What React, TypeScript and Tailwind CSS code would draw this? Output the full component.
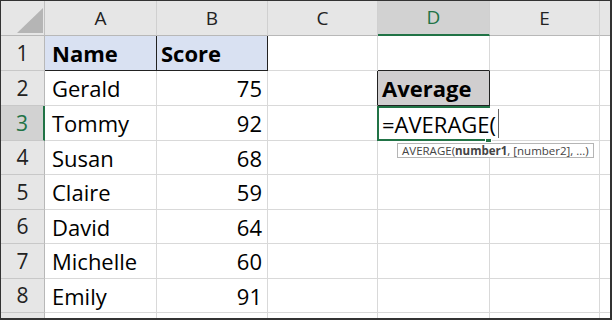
import React from "react";

const font = { fontFamily: '"Open Sans", "Noto Sans", sans-serif' };

type Row = {
  n: number;
  h: string;
  a: string;
  b: string;
};

const rows: Row[] = [
  { n: 1, h: "h-[35px]", a: "Name", b: "Score" },
  { n: 2, h: "h-[35px]", a: "Gerald", b: "75" },
  { n: 3, h: "h-[35px]", a: "Tommy", b: "92" },
  { n: 4, h: "h-[34px]", a: "Susan", b: "68" },
  { n: 5, h: "h-[35px]", a: "Claire", b: "59" },
  { n: 6, h: "h-[34px]", a: "David", b: "64" },
  { n: 7, h: "h-[35px]", a: "Michelle", b: "60" },
  { n: 8, h: "h-[34px]", a: "Emily", b: "91" },
];

function HeaderCell({ w, label, active }: { w: string; label: string; active?: boolean }) {
  return (
    <div
      className={`${w} h-full shrink-0 flex items-center justify-center text-[19px] leading-none border-r border-r-[#d0d0d0] ${
        active
          ? "bg-[#d2d2d2] text-[#217346] border-b-2 border-b-[#217346]"
          : "bg-[#e6e6e6] text-[#222] border-b border-b-[#b8b8b8]"
      }`}
    >
      {label}
    </div>
  );
}

export default function App() {
  return (
    <div
      className="w-[612px] h-[320px] bg-white border-l border-t border-l-[#333] border-t-[#333] border-r-2 border-b-2 border-r-[#333] border-b-[#333] flex flex-col overflow-hidden text-black"
      style={font}
    >
      {/* column header */}
      <div className="flex h-[35px] shrink-0">
        <div className="w-[44px] h-full shrink-0 bg-[#e6e6e6] border-r border-b border-r-[#c0c0c0] border-b-[#b8b8b8] relative">
          <svg width="43" height="34" className="absolute left-0 top-0">
            <polygon points="42,7 42,32 16,32" fill="#b5b5b5" />
          </svg>
        </div>
        <HeaderCell w="w-[112px]" label="A" />
        <HeaderCell w="w-[111px]" label="B" />
        <HeaderCell w="w-[110px]" label="C" />
        <HeaderCell w="w-[112px]" label="D" active />
        <HeaderCell w="w-[110px]" label="E" />
        <div className="flex-1 h-full bg-[#e6e6e6] border-b border-b-[#b8b8b8]" />
      </div>

      {rows.map((r) => {
        const isHead = r.n === 1;
        const sel = r.n === 3;
        return (
          <div key={r.n} className={`flex ${r.h} shrink-0`}>
            {/* row header */}
            <div
              className={`w-[44px] h-full shrink-0 flex items-center justify-center text-[21px] leading-none border-b border-b-[#c8c8c8] ${
                sel
                  ? "bg-[#d2d2d2] text-[#217346] border-r-2 border-r-[#217346]"
                  : "bg-[#e6e6e6] text-[#222] border-r border-r-[#b8b8b8]"
              }`}
            >
              {r.n}
            </div>
            {/* A */}
            <div
              className={`w-[112px] h-full shrink-0 flex items-center pl-[7px] text-[22px] leading-none whitespace-nowrap border-r border-b ${
                isHead
                  ? "bg-[#d9e1f2] font-bold border-r-[#222] border-b-[#222]"
                  : "border-r-[#d9d9d9] border-b-[#d9d9d9]"
              }`}
            >
              {r.a}
            </div>
            {/* B */}
            <div
              className={`w-[111px] h-full shrink-0 flex items-center text-[22px] leading-none whitespace-nowrap border-r border-b ${
                isHead
                  ? "bg-[#d9e1f2] font-bold justify-start pl-[4px] border-r-[#222] border-b-[#222]"
                  : "justify-end pr-[5px] border-r-[#d9d9d9] border-b-[#d9d9d9]"
              }`}
            >
              {r.b}
            </div>
            {/* C */}
            <div
              className={`w-[110px] h-full shrink-0 border-b border-b-[#d9d9d9] border-r ${
                r.n === 2 ? "border-r-[#222]" : "border-r-[#d9d9d9]"
              }`}
            />
            {/* D */}
            {r.n === 2 ? (
              <div className="w-[112px] h-full shrink-0 flex items-center pl-[4px] text-[22px] leading-none font-bold bg-[#d0cecf] border-r border-b border-r-[#222] border-b-[#222]">
                Average
              </div>
            ) : sel ? (
              <div className="w-[112px] h-full shrink-0 relative z-10 border-r border-b border-r-[#d9d9d9] border-b-[#d9d9d9]">
                <div className="absolute top-0 -left-px -right-px -bottom-px border-2 border-[#217346] pointer-events-none">
                  <div className="absolute -right-[4px] -bottom-[4px] w-[7px] h-[6px] bg-[#217346] border border-white" />
                </div>
                <div className="absolute left-[1px] top-[2px] bottom-[1px] flex items-center pl-[3px] pr-[2px] bg-white text-[22px] leading-none whitespace-nowrap">
                  <span>=AVERAGE(</span>
                  <span className="inline-block w-px h-[29px] bg-[#666] ml-[2px]" />
                </div>
                <div className="absolute left-[19px] top-[37px] h-[15px] px-[4px] flex items-center bg-white border border-[#b5b5b5] text-[11.5px] leading-none text-[#444] whitespace-nowrap">
                  <span>AVERAGE(</span>
                  <span className="font-bold">number1</span>
                  <span>, [number2], ...)</span>
                </div>
              </div>
            ) : (
              <div
                className={`w-[112px] h-full shrink-0 border-r border-b border-r-[#d9d9d9] ${
                  r.n === 1 ? "border-b-[#222]" : "border-b-[#d9d9d9]"
                }`}
              />
            )}
            {/* E */}
            <div className="w-[110px] h-full shrink-0 border-r border-b border-r-[#d9d9d9] border-b-[#d9d9d9]" />
            <div className="flex-1 h-full border-b border-b-[#d9d9d9]" />
          </div>
        );
      })}

      {/* partial row */}
      <div className="flex flex-1">
        <div className="w-[44px] h-full shrink-0 bg-[#e6e6e6] border-r border-r-[#b8b8b8]" />
        <div className="w-[112px] h-full shrink-0 border-r border-r-[#d9d9d9]" />
        <div className="w-[111px] h-full shrink-0 border-r border-r-[#d9d9d9]" />
        <div className="w-[110px] h-full shrink-0 border-r border-r-[#d9d9d9]" />
        <div className="w-[112px] h-full shrink-0 border-r border-r-[#d9d9d9]" />
        <div className="w-[110px] h-full shrink-0 border-r border-r-[#d9d9d9]" />
        <div className="flex-1 h-full" />
      </div>
    </div>
  );
}
